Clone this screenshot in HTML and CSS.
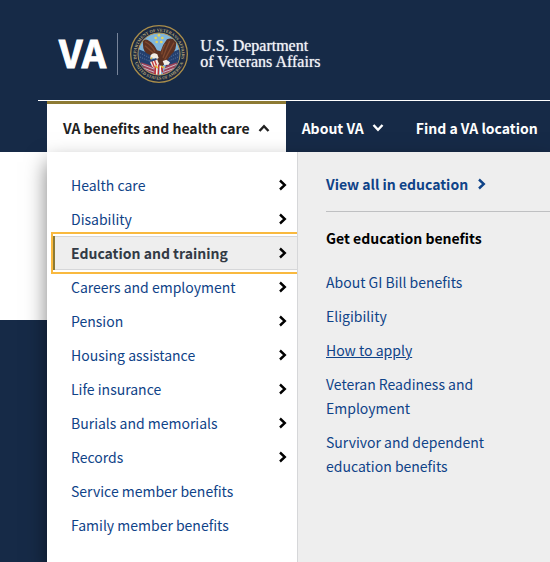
FILE: index.html
```html
<!DOCTYPE html>
<html lang="en">
<head>
<meta charset="utf-8">
<meta name="viewport" content="width=device-width, initial-scale=1">
<title>VA benefits and health care</title>
<link rel="stylesheet" href="styles.css">
</head>
<body>
<svg class="sprite" aria-hidden="true">
  <symbol id="chevron" viewBox="0 0 12 12"><path d="M3 1.5 L7.8 6 L3 10.5" fill="none" stroke="currentColor" stroke-width="2.4"/></symbol>
</svg>
<header class="header">
  <a class="brand" href="#">
    <span class="brand-va">VA</span>
    <svg class="seal" viewBox="0 0 174 174" role="img" aria-label="Seal">
      <defs>
        <path id="arc-top" d="M24 113 A68 68 0 1 1 150 113"/>
        <path id="arc-bottom" d="M10 87 A77 77 0 0 0 164 87"/>
        <clipPath id="disc"><circle cx="87" cy="87" r="62"/></clipPath>
      </defs>
      <circle cx="87" cy="87" r="85" fill="#1b2942" stroke="#a98d4b" stroke-width="4"/>
      <circle cx="87" cy="87" r="63" fill="#7fb6dc" stroke="#b99a54" stroke-width="3"/>
      <g class="seal-text">
        <text><textPath href="#arc-top" startOffset="50%" text-anchor="middle">DEPARTMENT OF VETERANS AFFAIRS</textPath></text>
        <text><textPath href="#arc-bottom" startOffset="50%" text-anchor="middle">UNITED STATES OF AMERICA</textPath></text>
      </g>
      <g clip-path="url(#disc)">
        <path d="M24 72 L64 88 L72 144 L26 122Z M150 72 L112 88 L104 144 L148 122Z" fill="#24406f"/>
        <path d="M30 84 L62 100 M30 96 L62 110 M144 84 L116 98 M144 96 L116 108" stroke="#7d93b7" stroke-width="2" stroke-dasharray="3 4"/>
        <path d="M32 112 L70 124 L76 148 L48 142Z M142 112 L108 122 L98 148 L128 142Z" fill="#9c4257"/>
        <path d="M35 118 L72 132 M42 130 L74 142 M140 118 L104 132 M133 130 L100 142" stroke="#c9bcc9" stroke-width="3"/>
        <g fill="#e6d45d"><circle cx="87" cy="31" r="4"/><circle cx="77" cy="39" r="4"/><circle cx="97" cy="39" r="4"/><circle cx="80" cy="51" r="4"/><circle cx="94" cy="51" r="4"/></g>
        <path d="M38 48 Q45 39 57 47 Q73 57 81 76 L92 79 Q99 57 111 43 Q128 36 138 50 Q141 73 125 88 Q115 98 108 113 L97 123 Q86 123 79 109 L68 92 Q44 88 40 70Z" fill="#5c3223"/>
        <path d="M45 50 Q65 60 75 80 M45 62 Q59 75 74 86 M106 56 Q97 70 95 88 M119 48 Q109 70 99 98 M132 53 Q118 78 104 104" fill="none" stroke="#80492f" stroke-width="4"/>
        <path d="M62 91 Q69 81 82 88 L86 99 L75 105 L69 98 L60 101Z" fill="#f3eee5"/>
        <path d="M60 98 L68 97 L64 104Z" fill="#e9b53a"/>
        <path d="M98 108 L109 104 L120 112 L116 119 L103 120Z" fill="#f2eee7"/>
        <path d="M59 105 L80 99 L86 115 Q83 129 75 131 Q63 126 59 105Z" fill="#f4e8df"/>
        <path d="M65 106 L73 127 M73 104 L80 123" stroke="#c23b3e" stroke-width="4"/>
        <path d="M59 105 L79 99 L81 104 L61 111Z" fill="#284677"/>
        <path d="M76 124 L75 151 M87 119 L84 151 M94 123 L98 142" stroke="#bf3038" stroke-width="5"/>
        <path d="M81 121 L80 151 M91 122 L91 149" stroke="#fff0e3" stroke-width="4"/>
        <path d="M75 123 L84 129 M93 124 L103 128" stroke="#e6b837" stroke-width="5"/>
      </g>
    </svg>
    <span class="brand-name">U.S. Department<br>of Veterans Affairs</span>
  </a>
  <nav class="nav" aria-label="Main">
    <button class="nav-item nav-item-open" type="button" aria-expanded="true">VA benefits and health care<svg class="chevron chevron-up" aria-hidden="true"><use href="#chevron"/></svg></button>
    <button class="nav-item" type="button" aria-expanded="false">About VA<svg class="chevron chevron-down" aria-hidden="true"><use href="#chevron"/></svg></button>
    <a class="nav-item" href="#">Find a VA location</a>
  </nav>
</header>
<div class="mega">
  <ul class="topics">
    <li><button class="topic" type="button">Health care<svg class="chevron" aria-hidden="true"><use href="#chevron"/></svg></button></li>
    <li><button class="topic" type="button">Disability<svg class="chevron" aria-hidden="true"><use href="#chevron"/></svg></button></li>
    <li><button class="topic topic-current" type="button" aria-expanded="true">Education and training<svg class="chevron" aria-hidden="true"><use href="#chevron"/></svg></button></li>
    <li><button class="topic" type="button">Careers and employment<svg class="chevron" aria-hidden="true"><use href="#chevron"/></svg></button></li>
    <li><button class="topic" type="button">Pension<svg class="chevron" aria-hidden="true"><use href="#chevron"/></svg></button></li>
    <li><button class="topic" type="button">Housing assistance<svg class="chevron" aria-hidden="true"><use href="#chevron"/></svg></button></li>
    <li><button class="topic" type="button">Life insurance<svg class="chevron" aria-hidden="true"><use href="#chevron"/></svg></button></li>
    <li><button class="topic" type="button">Burials and memorials<svg class="chevron" aria-hidden="true"><use href="#chevron"/></svg></button></li>
    <li><button class="topic" type="button">Records<svg class="chevron" aria-hidden="true"><use href="#chevron"/></svg></button></li>
    <li><a class="topic" href="#">Service member benefits</a></li>
    <li><a class="topic" href="#">Family member benefits</a></li>
  </ul>
  <section class="panel">
    <a class="view-all" href="#">View all in education<svg class="chevron" aria-hidden="true"><use href="#chevron"/></svg></a>
    <h2 class="panel-title">Get education benefits</h2>
    <ul class="links">
      <li><a href="#">About GI Bill benefits</a></li>
      <li><a href="#">Eligibility</a></li>
      <li><a class="hovered" href="#">How to apply</a></li>
      <li><a href="#">Veteran Readiness and Employment</a></li>
      <li><a href="#">Survivor and dependent education benefits</a></li>
    </ul>
  </section>
</div>
<main class="content"></main>
<footer class="footer"></footer>
</body>
</html>
```

FILE: styles.css
```css
* { box-sizing: border-box; }

body {
  position: relative;
  display: flex;
  flex-direction: column;
  min-height: 100vh;
  margin: 0;
  overflow-x: hidden;
  background: #fff;
  font: 14px/24px "Noto Sans CJK SC", sans-serif;
}

a { color: inherit; text-decoration: none; }
ul { margin: 0; padding: 0; list-style: none; }
button { border: 0; background: none; font: inherit; color: inherit; cursor: pointer; }

.sprite { position: absolute; width: 0; height: 0; }

.header {
  background: #162a47;
  color: #fff;
}

.brand {
  display: flex;
  align-items: center;
  height: 100px;
  padding: 8px 0 0 59px;
}

.brand-va {
  padding: 0 11px 4px 0;
  border-right: 1px solid #77849a;
  font: 700 38px/38px "Noto Sans CJK SC", sans-serif;
  -webkit-text-stroke: 1px #fff;
}

.seal {
  width: 58px;
  height: 58px;
  margin: 0 12px;
}

.seal-text {
  fill: #b9a878;
  font: 700 13px "Liberation Serif", serif;
}

.brand-name {
  font: 16px/16px "Liberation Serif", serif;
  color: #f1f3f6;
  text-shadow: 0 0 1px #c9d0da;
}

.nav {
  display: flex;
  margin-left: 38px;
  padding-left: 9px;
  border-top: 1px solid #fff;
  overflow: hidden;
}

.nav-item {
  display: flex;
  flex: none;
  align-items: center;
  gap: 8px;
  height: 51px;
  padding: 3px 16px 0;
  font-weight: 700;
  white-space: nowrap;
}

.nav-item-open {
  padding-top: 0;
  border-top: 3px solid #8d7a34;
  background: #fff;
  color: #212121;
}

.chevron {
  flex: none;
  width: 12px;
  height: 12px;
}
.chevron-up { transform: rotate(-90deg); }
.chevron-down { transform: rotate(90deg); }

.mega {
  position: absolute;
  top: 152px;
  right: 0;
  bottom: 0;
  left: 47px;
  display: flex;
  background: #fff;
  box-shadow: 0 10px 20px rgba(0, 0, 0, 0.5);
}

.topics {
  flex: none;
  width: 251px;
  padding: 16px 0 16px 8px;
  border-right: 1px solid #d6d7d9;
  overflow: hidden;
}

.topic {
  display: flex;
  align-items: center;
  justify-content: space-between;
  width: 100%;
  height: 34px;
  padding: 0 8px 0 16px;
  color: #0f4388;
  text-align: left;
}
.topic .chevron { color: #000; }

.topic-current {
  border: solid #d6d7d9;
  border-width: 1px 0;
  outline: 2px solid #f9b93f;
  outline-offset: 2px;
  background: #eee;
  box-shadow: -2px 0 #8d7a34;
  color: #323a45;
  font-weight: 700;
}

.panel {
  flex: 1;
  min-width: 0;
  padding: 20px 0 20px 28px;
  background: #eee;
}

.view-all {
  display: flex;
  align-items: center;
  gap: 8px;
  padding-bottom: 15px;
  border-bottom: 1px solid #bfc0c2;
  color: #0f4388;
  font-weight: 700;
}

.panel-title {
  margin: 14px 0 20px;
  color: #000;
  font-size: 14px;
  line-height: 24px;
}

.links {
  display: grid;
  gap: 10px;
  max-width: 180px;
  color: #0f4388;
}
.hovered { text-decoration: underline; }

.content { height: 168px; }

.footer {
  flex: 1;
  background: #162a47;
}
```
